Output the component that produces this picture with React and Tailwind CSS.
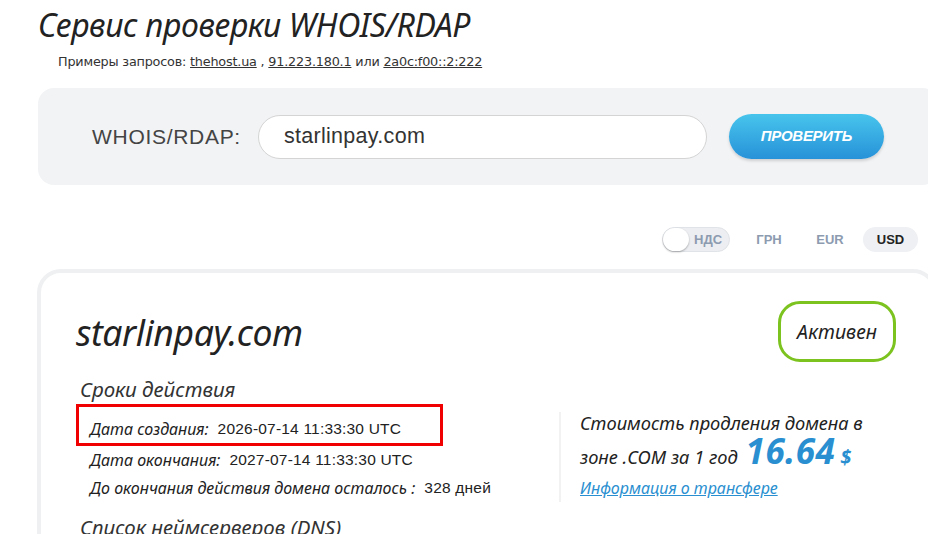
import React from "react";

const italic = "font-['Noto_Sans',sans-serif] italic";
const arial = "font-['Liberation_Sans',Arial,sans-serif]";

const currencies = [
  { code: "ГРН", active: false },
  { code: "EUR", active: false },
  { code: "USD", active: true },
];

const dates = [
  { label: "Дата создания:", value: "2026-07-14 11:33:30 UTC", marked: true },
  { label: "Дата окончания:", value: "2027-07-14 11:33:30 UTC" },
  { label: "До окончания действия домена осталось :", value: "328 дней" },
];

const App = () => {
  return (
    <div className="w-[928px] h-[534px] overflow-hidden bg-white text-[#222]">
      {/* Заголовок */}
      <div className="pl-[38px] pt-[5px]">
        <h1 className={`${italic} text-[32px] leading-[40px] tracking-[-0.4px] text-[#222]`}>
          Сервис проверки WHOIS/RDAP
        </h1>
        <p className="font-['DejaVu_Sans',sans-serif] ml-[20px] mt-[9px] text-[12.8px] leading-[16px] text-[#333] tracking-[-0.2px]">
          Примеры запросов: <span className="underline">thehost.ua</span> ,{" "}
          <span className="underline">91.223.180.1</span> или{" "}
          <span className="underline">2a0c:f00::2:222</span>
        </p>
      </div>

      {/* Форма запроса */}
      <div className="ml-[38px] mt-[18px] w-[900px] h-[97px] rounded-[16px] bg-[#f2f3f5] flex items-center">
        <span className={`${arial} ml-[54px] text-[21px] text-[#444] tracking-[0.7px]`}>WHOIS/RDAP:</span>
        <div className="ml-[17px] w-[449px] h-[44px] rounded-full border border-[#d4d4d4] bg-white flex items-center pl-[25px]">
          <span className={`${arial} text-[21.5px] text-[#333] tracking-[0.3px]`}>starlinpay.com</span>
        </div>
        <button className="ml-[22px] w-[155px] h-[45px] rounded-full bg-gradient-to-b from-[#47c4ec] to-[#2892d8] shadow-[0_2px_3px_rgba(0,0,0,0.15)] flex items-center justify-center">
          <span className={`${arial} italic font-bold text-[15px] text-white tracking-[-0.3px]`}>ПРОВЕРИТЬ</span>
        </button>
      </div>

      {/* Валюта */}
      <div className={`${arial} mt-[42px] flex items-center justify-end pr-[10px] text-[13px] font-bold`}>
        <div className="flex items-center w-[68px] h-[25px] rounded-full bg-[#eceef1] border border-[#e0e3e7]">
          <div className="w-[26px] h-[23px] rounded-full bg-white shadow-[0_1px_2px_rgba(0,0,0,0.3)]"></div>
          <span className="ml-[5px] text-[#8d9bb0]">НДС</span>
        </div>
        {currencies.map((c) => (
          <div
            key={c.code}
            className={`h-[25px] flex items-center justify-center rounded-full ${
              c.active ? "ml-[11px] w-[55px] bg-[#eef0f3] text-[#222]" : "ml-[17px] w-[44px] text-[#8d9bb0]"
            }`}
          >
            {c.code}
          </div>
        ))}
      </div>

      {/* Карточка домена */}
      <div className="ml-[37px] mt-[17px] w-[900px] h-[300px] rounded-[24px] border-[4px] border-[#eef0f2] pl-[35px] pr-[37px] pt-[28px]">
        <div className="flex items-start justify-between">
          <h2 className={`${italic} mt-[9px] text-[35.5px] leading-[44px] tracking-[-0.4px] text-[#222]`}>starlinpay.com</h2>
          <div className="w-[118px] h-[61px] rounded-[22px] border-[3px] border-[#7cc320] flex items-center justify-center">
            <span className={`${italic} text-[19.5px] text-[#222]`}>Активен</span>
          </div>
        </div>

        <div className="flex mt-[14px]">
          <div className="w-[483px] shrink-0">
            <h3 className={`${italic} ml-[4px] text-[20.5px] leading-[26px] text-[#333]`}>Сроки действия</h3>
            <div className="mt-[2px] flex flex-col">
              {dates.map((d) => (
                <div
                  key={d.label}
                  className={`${italic} text-[16px] text-[#222] flex items-center ${
                    d.marked
                      ? "w-[367px] h-[42px] border-[3px] border-[#f00000] pl-[11px] pt-[8px]"
                      : "h-[28px] pl-[14px]"
                  }`}
                >
                  <span>{d.label}</span>
                  <span className="not-italic ml-[9px] font-['Liberation_Sans',Arial,sans-serif] text-[15.5px] tracking-[0.2px]">
                    {d.value}
                  </span>
                </div>
              ))}
            </div>
            <h3 className={`${italic} ml-[4px] mt-[12px] text-[20.5px] leading-[26px] text-[#333]`}>
              Список неймсерверов (DNS)
            </h3>
          </div>

          <div className="mt-[36px] h-[90px] border-l-[2px] border-[#f2f2f2] pl-[19px]">
            <p className={`${italic} text-[18.3px] leading-[22px] text-[#222]`}>Стоимость продления домена в</p>
            <p className={`${italic} mt-[2px] text-[18.3px] leading-[30px] text-[#222] flex items-baseline`}>
              зоне .COM за 1 год
              <span className="ml-[8px] text-[35px] leading-[30px] font-bold text-[#2a8fd0] tracking-[0.5px]">16.64</span>
              <span className="ml-[5px] text-[20px] font-bold text-[#2a8fd0]">$</span>
            </p>
            <a className={`${italic} block mt-[5px] text-[16px] leading-[22px] text-[#2a8fd0] underline`}>Информация о трансфере</a>
          </div>
        </div>
      </div>
    </div>
  );
};

export default App;
